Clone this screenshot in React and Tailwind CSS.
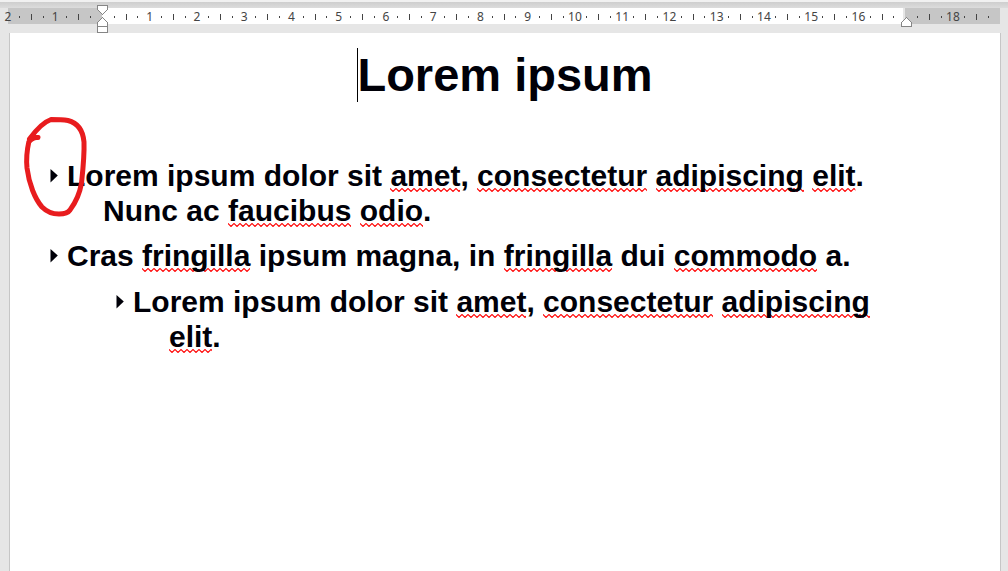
import React, { useId } from "react";

const FIRST_TICK = -8;
const LAST_TICK = 75;
const TICKS = Array.from({ length: LAST_TICK - FIRST_TICK + 1 }, (_, i) => FIRST_TICK + i);

function LeftIndentMarker() {
  return (
    <svg className="absolute left-1/2 -top-[3px] -ml-[5px]" width="11" height="28" viewBox="0 0 11 28" shapeRendering="crispEdges" aria-hidden="true">
      <path d="M.5 .5h10v4l-5 5-5-5z" fill="#fff" stroke="#858585" />
      <path d="M.5 27.500v-10l5-5 5 5v10z" fill="#fff" stroke="#858585" />
      <path d="M0 21.500h11" stroke="#858585" />
    </svg>
  );
}

function RightIndentMarker() {
  return (
    <svg className="absolute left-1/2 top-[9px] -ml-[5px]" width="11" height="10" viewBox="0 0 11 10" shapeRendering="crispEdges" aria-hidden="true">
      <path d="M.5 9.500v-4l5-5 5 5v4z" fill="#fff" stroke="#858585" />
    </svg>
  );
}

function Tick({ n }) {
  const whole = n % 4 === 0;
  const half = n % 2 === 0;
  let mark;
  if (n === 0) mark = <LeftIndentMarker />;
  else if (n === 68) mark = <RightIndentMarker />;
  else if (whole) mark = <span>{Math.abs(n / 4)}</span>;
  else if (half) mark = <i className="h-[6px] w-px bg-[#444]" />;
  else mark = <i className="h-[2px] w-px bg-[#444]" />;
  return <div className="relative flex min-w-0 flex-1 items-center justify-center pt-[2px]">{mark}</div>;
}

function Ruler() {
  return (
    <div className="grid h-4">
      <div className="col-start-1 row-start-1 mx-2 flex h-4">
        <div className="w-[94px] bg-[#c6c6c6]" />
        <div className="flex-1 bg-white" />
        <div className="w-[2px] bg-[#e6e6e6]" />
        <div className="w-[95px] bg-[#c6c6c6]" />
      </div>
      <div className="relative col-start-1 row-start-1 ml-[2px] mr-[14px] flex h-4 font-['Noto_Sans',sans-serif] text-[12px] leading-4 text-[#444]">
        {TICKS.map((n) => (
          <Tick key={n} n={n} />
        ))}
      </div>
    </div>
  );
}

function Misspelled({ children }) {
  const id = useId();
  return (
    <span className="relative">
      {children}
      <svg className="absolute bottom-0 left-0 -z-10 h-1 w-full" aria-hidden="true">
        <pattern id={id} width="6" height="4" patternUnits="userSpaceOnUse">
          <path d="M-1 1.500L0 .5 3 3.500 6 .5 7 1.500" fill="none" stroke="#f00" strokeWidth="1.100" />
        </pattern>
        <rect width="100%" height="4" fill={`url(#${id})`} />
      </svg>
    </span>
  );
}

function Bullet() {
  return (
    <svg className="inline-block align-baseline" width="17" height="18" viewBox="0 0 17 18" aria-hidden="true">
      <path d="M.5 1L7.800 7.500.5 14.500z" fill="#000008" />
    </svg>
  );
}

function RedCircle() {
  return (
    <svg className="pointer-events-none absolute left-3 top-[83px]" width="66" height="102" viewBox="22 116 66 102" fill="none" aria-hidden="true">
      <path
        d="M38 137.500C34 137 31 139 28.800 142C27 150 26.200 160 27 168C29 184 35 199 42 207C48 213 54 214 59 214C64 214 68 213 70 210C76 202 80 192 81.500 183C83 169 84.500 156 84 142C83 131 78 123 68 120.500C62 119.500 56 119.500 51 119.500C44 122 36 130 29.500 139"
        stroke="#e81c1e"
        strokeWidth="5"
        strokeLinecap="round"
        strokeLinejoin="round"
      />
    </svg>
  );
}

export default function App() {
  return (
    <div className="flex min-h-screen flex-col bg-[#e6e6e6]">
      <div className="h-[2px] bg-[#f1f1f1]" />
      <div className="h-[6px] bg-linear-to-b from-[#cecece] to-[#dcdcdc]" />
      <Ruler />
      <main className="relative isolate ml-[9px] mr-[7px] mt-[9px] flex-1 border-x border-[#c6c6c6] bg-white pt-[15px] font-['Liberation_Sans',Arial,sans-serif] font-bold text-[#000008]">
        <h1 className="text-center text-[47px] leading-[54px]">
          <span className="relative inline-block">
            <i className="absolute left-0 top-0 h-[54px] w-px bg-black" />
            Lorem ipsum
          </span>
        </h1>
        <ul className="mt-14 pr-[95px] text-[30px] leading-[35px]">
          <li className="pl-[93px] -indent-[53px]">
            <Bullet />
            Lorem ipsum dolor sit <Misspelled>amet</Misspelled>, <Misspelled>consectetur</Misspelled>{" "}
            <Misspelled>adipiscing</Misspelled> <Misspelled>elit</Misspelled>. Nunc ac{" "}
            <Misspelled>faucibus</Misspelled> <Misspelled>odio</Misspelled>.
          </li>
          <li className="mt-[10px]">
            <div className="pl-[93px] -indent-[53px]">
              <Bullet />
              Cras <Misspelled>fringilla</Misspelled> ipsum magna, in <Misspelled>fringilla</Misspelled> dui{" "}
              <Misspelled>commodo</Misspelled> a.
            </div>
            <ul className="mt-[11px]">
              <li className="pl-[159px] -indent-[53px]">
                <Bullet />
                Lorem ipsum dolor sit <Misspelled>amet</Misspelled>, <Misspelled>consectetur</Misspelled>{" "}
                <Misspelled>adipiscing</Misspelled> <Misspelled>elit</Misspelled>.
              </li>
            </ul>
          </li>
        </ul>
        <RedCircle />
      </main>
    </div>
  );
}
